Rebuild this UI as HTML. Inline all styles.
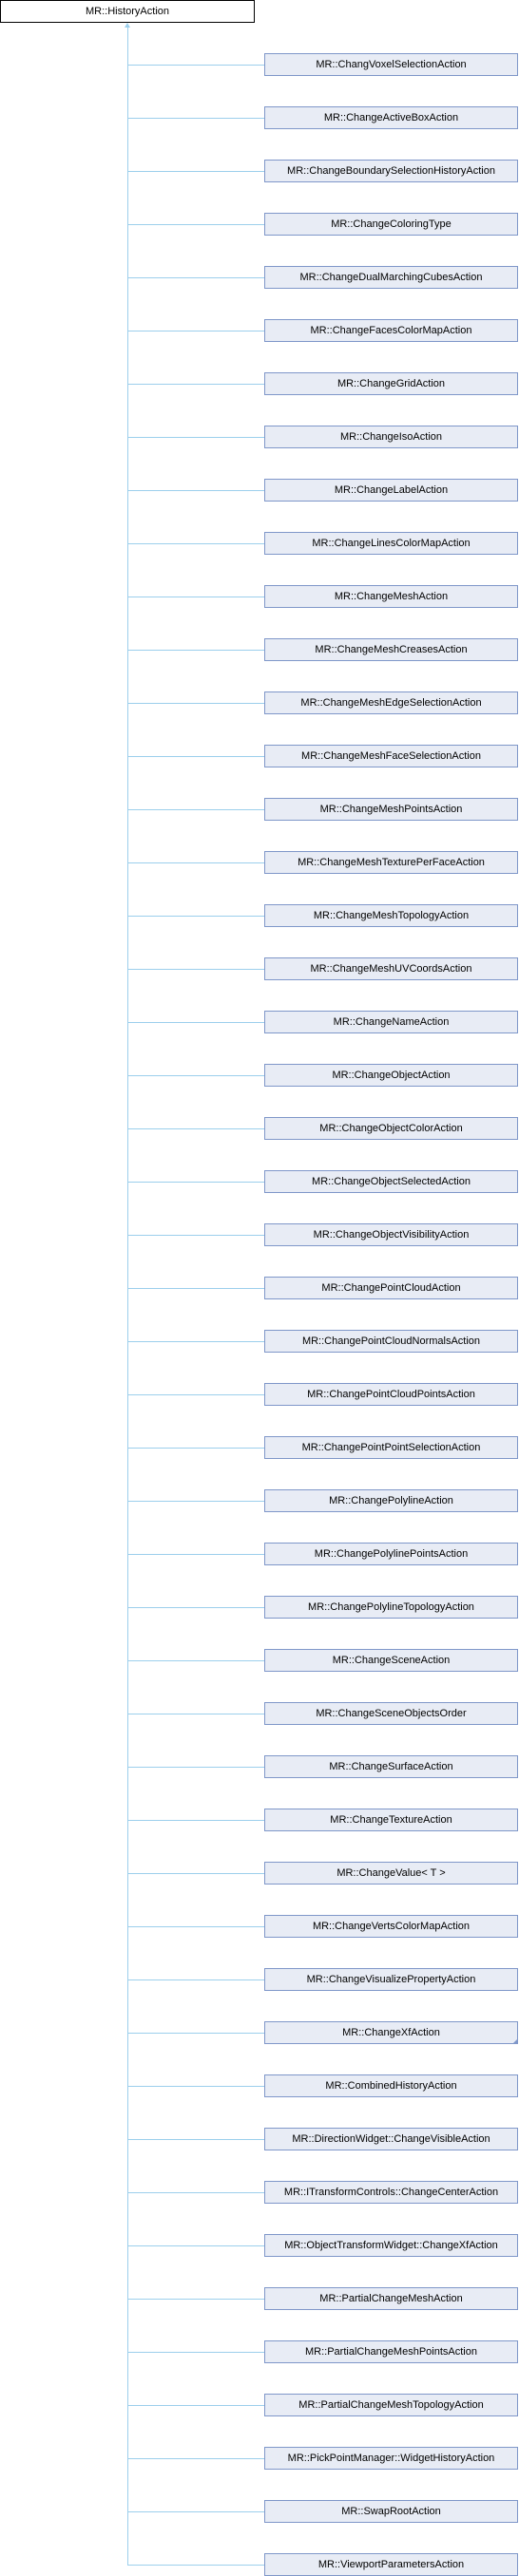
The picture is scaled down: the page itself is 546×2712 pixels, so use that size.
<!DOCTYPE html>
<html><head><meta charset="utf-8"><style>
body{margin:0;background:#fff;width:546px;height:2712px;position:relative;overflow:hidden;font-family:"Liberation Sans",Arial,sans-serif;font-size:11px;color:#000}
.b{position:absolute;left:278px;width:265px;height:22px;line-height:22px;text-align:center;background:#e8ecf5;border:1px solid #7f97c9;white-space:nowrap}
.r{position:absolute;left:0;top:0;width:266px;height:22px;line-height:22px;text-align:center;background:#fff;border:1px solid #000}
.h{position:absolute;left:134px;width:144px;height:1px;background:#9ccfec}
.v{position:absolute;left:134px;top:26px;width:1px;height:2675px;background:#9ccfec}
.a{position:absolute;left:131px;top:24px;width:0;height:0;border-left:3px solid transparent;border-right:3px solid transparent;border-bottom:5px solid #9ccfec}
</style></head><body>
<div class="r">MR::HistoryAction</div>
<div class="v"></div><div class="a"></div>
<div id="c"></div>
<script>
var n=["MR::ChangVoxelSelectionAction","MR::ChangeActiveBoxAction","MR::ChangeBoundarySelectionHistoryAction","MR::ChangeColoringType","MR::ChangeDualMarchingCubesAction","MR::ChangeFacesColorMapAction","MR::ChangeGridAction","MR::ChangeIsoAction","MR::ChangeLabelAction","MR::ChangeLinesColorMapAction","MR::ChangeMeshAction","MR::ChangeMeshCreasesAction","MR::ChangeMeshEdgeSelectionAction","MR::ChangeMeshFaceSelectionAction","MR::ChangeMeshPointsAction","MR::ChangeMeshTexturePerFaceAction","MR::ChangeMeshTopologyAction","MR::ChangeMeshUVCoordsAction","MR::ChangeNameAction","MR::ChangeObjectAction","MR::ChangeObjectColorAction","MR::ChangeObjectSelectedAction","MR::ChangeObjectVisibilityAction","MR::ChangePointCloudAction","MR::ChangePointCloudNormalsAction","MR::ChangePointCloudPointsAction","MR::ChangePointPointSelectionAction","MR::ChangePolylineAction","MR::ChangePolylinePointsAction","MR::ChangePolylineTopologyAction","MR::ChangeSceneAction","MR::ChangeSceneObjectsOrder","MR::ChangeSurfaceAction","MR::ChangeTextureAction","MR::ChangeValue&lt; T &gt;","MR::ChangeVertsColorMapAction","MR::ChangeVisualizePropertyAction","MR::ChangeXfAction","MR::CombinedHistoryAction","MR::DirectionWidget::ChangeVisibleAction","MR::ITransformControls::ChangeCenterAction","MR::ObjectTransformWidget::ChangeXfAction","MR::PartialChangeMeshAction","MR::PartialChangeMeshPointsAction","MR::PartialChangeMeshTopologyAction","MR::PickPointManager::WidgetHistoryAction","MR::SwapRootAction","MR::ViewportParametersAction"];
var h="";
for(var i=0;i<n.length;i++){var y=56+56*i;h+='<div class="h" style="top:'+(y+12)+'px"></div><div class="b" style="top:'+y+'px">'+n[i]+(i==37?'<span style="position:absolute;right:0;bottom:0;width:0;height:0;border-left:4px solid transparent;border-bottom:4px solid #7f97c9"></span>':'')+'</div>';}
document.getElementById("c").innerHTML=h;
</script>
</body></html>
